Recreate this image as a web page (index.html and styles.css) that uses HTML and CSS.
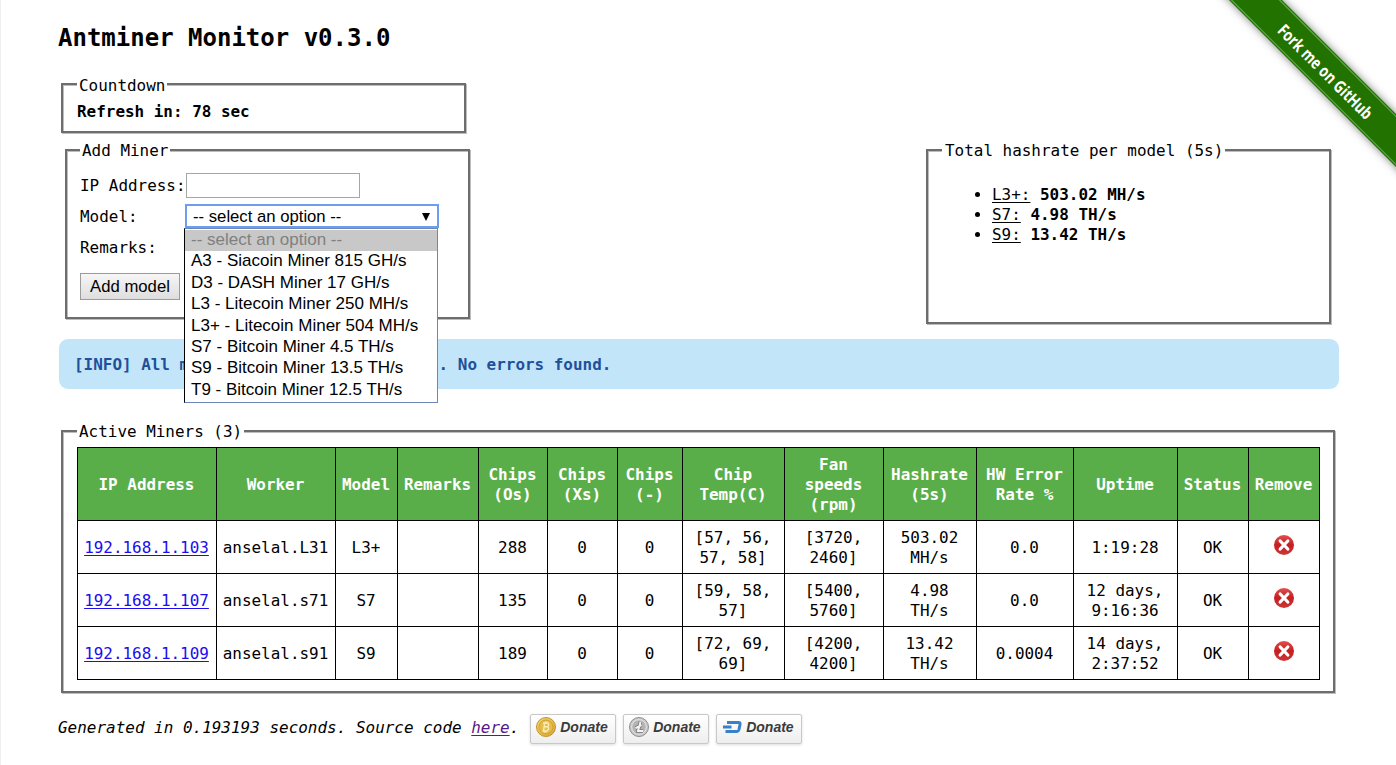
FILE: index.html
```html
<!DOCTYPE html>
<html lang="en">
<head>
<meta charset="utf-8">
<title>Antminer Monitor</title>
<link rel="stylesheet" href="styles.css">
</head>
<body>
<svg width="0" height="0" class="defs">
  <defs>
    <linearGradient id="red" x1="0" y1="0" x2="0" y2="1"><stop offset="0" stop-color="#e2504f"/><stop offset=".5" stop-color="#c41f20"/><stop offset="1" stop-color="#cc3838"/></linearGradient>
    <linearGradient id="gold" x1="0" y1="0" x2="1" y2="1"><stop offset="0" stop-color="#f6d873"/><stop offset="1" stop-color="#d9a52b"/></linearGradient>
    <symbol id="remove" viewBox="0 0 20 20"><circle cx="10" cy="10" r="10" fill="url(#red)"/><path d="M6.200 6 13.800 14M13.800 6 6.200 14" stroke="#fff" stroke-width="3.200" stroke-linecap="round"/></symbol>
  </defs>
</svg>
<svg class="ribbon" width="180" height="180" viewBox="0 0 180 180">
  <defs><filter id="shade" x="-20%" y="-20%" width="140%" height="140%"><feDropShadow dx="0" dy="0" stdDeviation="4" flood-color="#000" flood-opacity=".5"/></filter></defs>
  <path d="M-7-20H46L200 134V187Z" fill="#227200" filter="url(#shade)"/>
  <path d="M-4.500-20 200 184.500M43.500-20 200 136.500" stroke="#63a651" stroke-width="1.200" fill="none"/>
  <text class="ribbon-text" transform="translate(108.500 72.500) rotate(45)" text-anchor="middle" y="5" textLength="126" lengthAdjust="spacingAndGlyphs">Fork me on GitHub</text>
</svg>
<main class="page">
  <h1 class="title">Antminer Monitor v0.3.0</h1>
  <fieldset class="box countdown">
    <legend>Countdown</legend>
    <b>Refresh in: 78 sec</b>
  </fieldset>
  <div class="panels">
    <fieldset class="box add">
      <legend>Add Miner</legend>
      <div class="row"><label>IP Address:</label><input class="ip" type="text"></div>
      <div class="row"><label>Model:</label>
        <div class="select">
          <span>-- select an option --</span>
          <svg width="8" height="8" viewBox="0 0 8 8"><path d="M0 0H8L4 8Z"/></svg>
          <ul class="menu">
            <li class="off">-- select an option --</li>
            <li>A3 - Siacoin Miner 815 GH/s</li>
            <li>D3 - DASH Miner 17 GH/s</li>
            <li>L3 - Litecoin Miner 250 MH/s</li>
            <li>L3+ - Litecoin Miner 504 MH/s</li>
            <li>S7 - Bitcoin Miner 4.5 TH/s</li>
            <li>S9 - Bitcoin Miner 13.5 TH/s</li>
            <li>T9 - Bitcoin Miner 12.5 TH/s</li>
          </ul>
        </div>
      </div>
      <div class="row"><label>Remarks:</label></div>
      <button class="submit">Add model</button>
    </fieldset>
    <fieldset class="box total">
      <legend>Total hashrate per model (5s)</legend>
      <ul class="rates">
        <li><u>L3+:</u> <b>503.02 MH/s</b></li>
        <li><u>S7:</u> <b>4.98 TH/s</b></li>
        <li><u>S9:</u> <b>13.42 TH/s</b></li>
      </ul>
    </fieldset>
  </div>
  <div class="info">[INFO] All miners are operating normal. No errors found.</div>
  <fieldset class="box active">
    <legend>Active Miners (3)</legend>
    <table class="miners">
      <colgroup><col class="c139"><col class="c119"><col class="c62"><col class="c81"><col class="c69"><col class="c70"><col class="c65"><col class="c102"><col class="c99"><col class="c93"><col class="c97"><col class="c104"><col class="c71"><col class="c71"></colgroup>
      <thead><tr><th>IP Address</th><th>Worker</th><th>Model</th><th>Remarks</th><th>Chips<br>(Os)</th><th>Chips<br>(Xs)</th><th>Chips<br>(-)</th><th>Chip<br>Temp(C)</th><th>Fan<br>speeds<br>(rpm)</th><th>Hashrate<br>(5s)</th><th>HW Error<br>Rate %</th><th>Uptime</th><th>Status</th><th>Remove</th></tr></thead>
      <tbody>
        <tr><td><a href="#">192.168.1.103</a></td><td>anselal.L31</td><td>L3+</td><td></td><td>288</td><td>0</td><td>0</td><td>[57, 56,<br>57, 58]</td><td>[3720,<br>2460]</td><td>503.02<br>MH/s</td><td>0.0</td><td>1:19:28</td><td>OK</td><td><svg class="x" width="20" height="20"><use href="#remove"/></svg></td></tr>
        <tr><td><a href="#">192.168.1.107</a></td><td>anselal.s71</td><td>S7</td><td></td><td>135</td><td>0</td><td>0</td><td>[59, 58,<br>57]</td><td>[5400,<br>5760]</td><td>4.98<br>TH/s</td><td>0.0</td><td>12 days,<br>9:16:36</td><td>OK</td><td><svg class="x" width="20" height="20"><use href="#remove"/></svg></td></tr>
        <tr><td><a href="#">192.168.1.109</a></td><td>anselal.s91</td><td>S9</td><td></td><td>189</td><td>0</td><td>0</td><td>[72, 69,<br>69]</td><td>[4200,<br>4200]</td><td>13.42<br>TH/s</td><td>0.0004</td><td>14 days,<br>2:37:52</td><td>OK</td><td><svg class="x" width="20" height="20"><use href="#remove"/></svg></td></tr>
      </tbody>
    </table>
  </fieldset>
  <footer class="foot">
    <span class="gen">Generated in 0.193193 seconds. Source code <a class="seen" href="#">here</a>.</span>
    <a class="donate"><svg width="20" height="20" viewBox="0 0 20 20"><circle cx="10" cy="10" r="9.500" fill="url(#gold)" stroke="#c09430"/><circle cx="10" cy="10" r="7" fill="#e6bd4c" stroke="#d0a03a"/><path d="M7 6H11.200Q13 6.200 12.600 8.200 12.300 9.500 11 9.800 13 10.200 12.400 12.200 11.900 14 9.800 14H6.500M8.600 6 7.600 14M8.200 9.800H11M9.500 4.500V6M11 4.700V6M8.500 14V15.500M10 14V15.500" fill="none" stroke="#fbedb2" stroke-width="1.400"/></svg>Donate</a>
    <a class="donate"><svg width="20" height="20" viewBox="0 0 20 20"><circle cx="10" cy="10" r="9.500" fill="#c9c9c9" stroke="#8d8d8d"/><circle cx="10" cy="10" r="7.300" fill="#b4b4b4" stroke="#e4e4e4"/><path d="M11.500 5 9 14H14M6.500 11.200 12.500 8.200" fill="none" stroke="#777" stroke-width="3.600"/><path d="M11.500 5 9 14H14M6.500 11.200 12.500 8.200" fill="none" stroke="#f4f4f4" stroke-width="2"/></svg>Donate</a>
    <a class="donate"><svg width="20" height="20" viewBox="0 0 20 20"><path d="M5 5.500H16.500Q18.500 5.500 18 7.500L17 12.500Q16.500 14.500 14.500 14.500H3.500M1 10H9.500" fill="none" stroke="#3a80c9" stroke-width="3"/></svg>Donate</a>
  </footer>
</main>
</body>
</html>
```
FILE: styles.css
```css
* { box-sizing: border-box; }
body { margin: 0; background: #fff; box-shadow: inset 1px 0 0 #efefef; color: #000; font: 15.950px/20px "DejaVu Sans Mono", monospace; height: 765px; overflow: hidden; position: relative; }
.defs { position: absolute; }
.ribbon { position: absolute; top: 0; right: 0; overflow: hidden; }
.ribbon-text { font: bold 17px "Open Sans", sans-serif; fill: #fff; }
.page { padding: 24px 57px 0 58px; }
.title { margin: 0; font-size: 24px; line-height: 28px; height: 50px; }
.box { margin: 0; padding: 0 14px; border: 2px solid #6d6d6d; box-shadow: 1px 1px 0 #bdbdbd, inset 1px 1px 0 #bdbdbd; min-width: 0; }
.box legend { padding: 1px 2px 0; background: #fff; height: 20px; }
.countdown { margin-left: 3px; width: 405px; height: 59px; padding-top: 8px; }
.box.countdown legend { padding-top: 2px; }
.panels { display: flex; justify-content: space-between; align-items: flex-start; margin: 7px 8px 0 7px; height: 199px; }
.add { width: 405px; height: 179px; padding: 10px 13px 0; }
.total { width: 405px; height: 184px; padding-top: 25px; }
.box.total legend { padding-left: 3px; }
.row { display: flex; align-items: center; height: 31px; }
.row label { width: 105px; flex: none; white-space: nowrap; }
.ip { width: 174px; height: 25px; border: 1px solid #a6a6a6; padding: 0; margin-left: 1px; }
.select { position: relative; width: 254px; height: 24px; margin-bottom: 1px; border: 2px solid #6f9ded; display: flex; align-items: center; justify-content: space-between; padding: 1px 7px 0 6px; font: 16.700px/20px "Liberation Sans", Arial, sans-serif; background: #fff; flex: none; }
.menu { position: absolute; left: -3px; top: 22px; width: 254px; height: 175px; margin: 0; padding: 1px 0 0; list-style: none; border: 1px solid #6d87b8; border-left-color: #000; background: #fff; z-index: 2; font-size: 17px; }
.menu li { height: 21.400px; line-height: 20px; padding-left: 6px; white-space: nowrap; }
.menu .off { background: #c8c8c8; color: #808080; }
.submit { display: block; margin-top: 10px; width: 100px; height: 27px; padding: 0; border: 1px solid #9c9c9c; background: linear-gradient(#f6f6f6, #dedede); font: 16.700px "Liberation Sans", Arial, sans-serif; color: #000; white-space: nowrap; }
.rates { margin: 0; padding-left: 50px; }
.info { margin-left: 1px; height: 50px; padding: 16px 15px 0; border-radius: 9px; background: #c2e5f9; color: #1f509a; font-weight: bold; }
.active { margin: 32px 0 0 3px; width: 1274px; height: 272px; padding-top: 6px; }
.miners { border-collapse: collapse; table-layout: fixed; width: 1243px; text-align: center; }
.miners th, .miners td { border: 1px solid #000; padding: 2px 1px 0 0; white-space: nowrap; }
.miners th { height: 73px; background: #5aae49; color: #fff; }
.miners td { height: 53px; }
.miners td:last-child { padding: 0; }
.miners a { color: #1a0dee; }
.miners a, .seen, .rates u { text-decoration-thickness: 1px; text-underline-offset: 2px; }
.x { display: block; margin: -5px auto 0; }
.c139 { width: 139px; } .c119 { width: 119px; } .c62 { width: 62px; } .c81 { width: 81px; }
.c69 { width: 69px; } .c70 { width: 70px; } .c65 { width: 65px; } .c102 { width: 102px; }
.c99 { width: 99px; } .c93 { width: 93px; } .c97 { width: 97px; } .c104 { width: 104px; } .c71 { width: 71px; }
.foot { display: flex; align-items: flex-start; gap: 6.400px; margin-top: 21px; }
.gen { font-style: italic; letter-spacing: .015px; white-space: nowrap; margin: 4px 4px 0 0; }
.seen { color: #551a8b; }
.donate { display: flex; align-items: center; gap: 4.500px; width: 86.600px; height: 30px; padding: 0 0 4px 5px; border: 1px solid #c8c8c8; border-radius: 2px; background: linear-gradient(#fff, #eee); box-shadow: 0 1px 3px #ddd; font: italic bold 14px "Liberation Sans", Arial, sans-serif; color: #3b3b3b; }
```
